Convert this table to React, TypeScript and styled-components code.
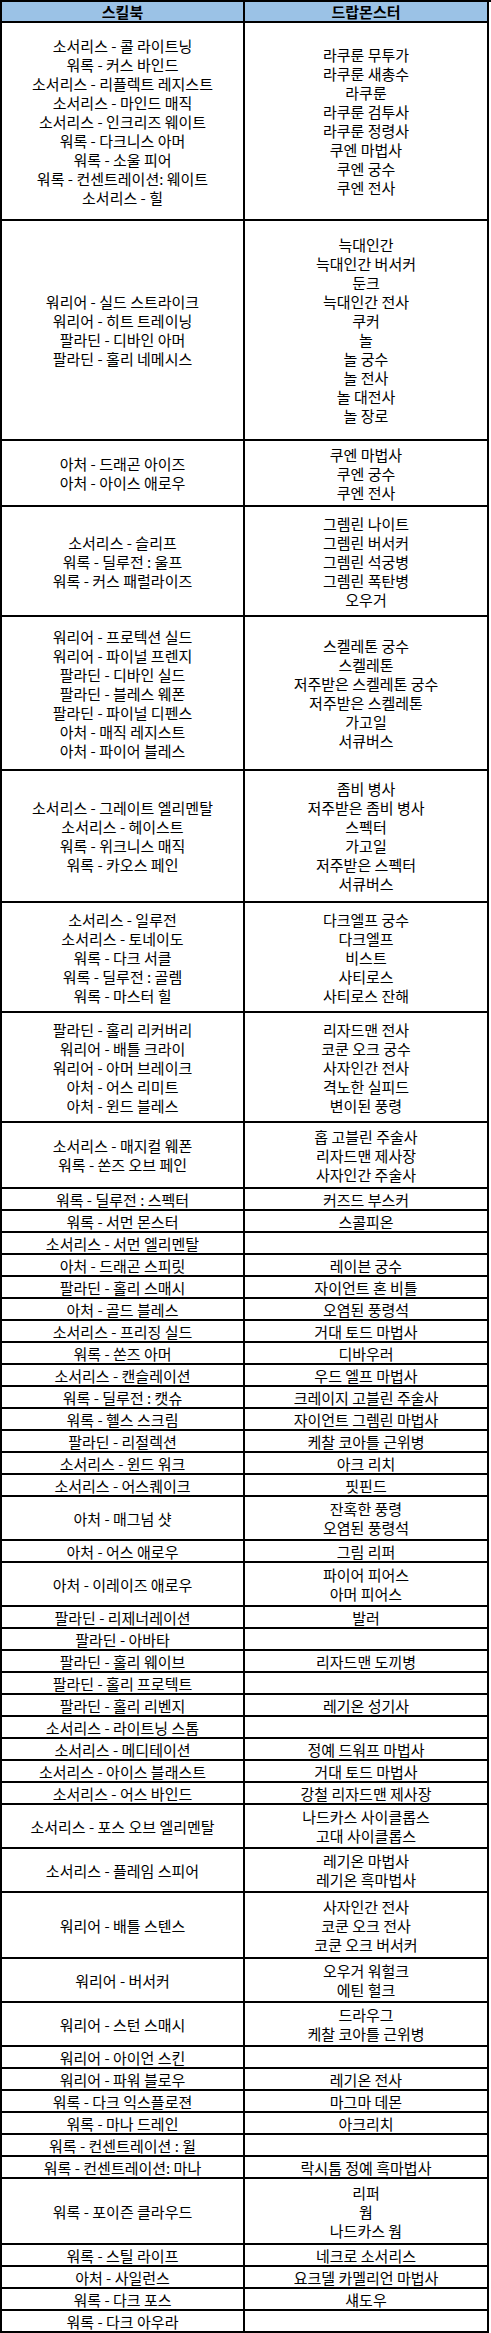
import styled, { createGlobalStyle } from "styled-components";

const GlobalStyle = createGlobalStyle`
  html, body {
    margin: 0;
    padding: 0;
    background: #fff;
  }
  body {
    font-family: "Noto Sans CJK KR", "Noto Sans", sans-serif;
    color: #000;
  }
`;

const Table = styled.div`
  width: 491px;
  box-sizing: border-box;
  border-top: 2px solid #000;
  border-left: 2px solid #000;
  display: grid;
  grid-template-columns: 243px 244px;
`;

const Cell = styled.div<{ $lines: number; $head?: boolean }>`
  box-sizing: border-box;
  height: ${({ $lines, $head }) => ($head ? 21 : $lines * 22)}px;
  border-right: 2px solid #000;
  border-bottom: 2px solid #000;
  background: ${({ $head }) => ($head ? "#9bc2e6" : "#fff")};
  display: flex;
  flex-direction: column;
  align-items: center;
  justify-content: center;
  text-align: center;
  font-size: 15px;
  line-height: 19px;
  font-weight: ${({ $head }) => ($head ? 700 : 400)};
  white-space: nowrap;
`;

type Row = { skill: string[]; drop: string[] };

const rows: Row[] = [
  {
    skill: [
      "소서리스 - 콜 라이트닝",
      "워록 - 커스 바인드",
      "소서리스 - 리플렉트 레지스트",
      "소서리스 - 마인드 매직",
      "소서리스 - 인크리즈 웨이트",
      "워록 - 다크니스 아머",
      "워록 - 소울 피어",
      "워록 - 컨센트레이션: 웨이트",
      "소서리스 - 힐",
    ],
    drop: [
      "라쿠룬 무투가",
      "라쿠룬 새총수",
      "라쿠룬",
      "라쿠룬 검투사",
      "라쿠룬 정령사",
      "쿠엔 마법사",
      "쿠엔 궁수",
      "쿠엔 전사",
    ],
  },
  {
    skill: [
      "워리어 - 실드 스트라이크",
      "워리어 - 히트 트레이닝",
      "팔라딘 - 디바인 아머",
      "팔라딘 - 홀리 네메시스",
    ],
    drop: [
      "늑대인간",
      "늑대인간 버서커",
      "둔크",
      "늑대인간 전사",
      "쿠커",
      "놀",
      "놀 궁수",
      "놀 전사",
      "놀 대전사",
      "놀 장로",
    ],
  },
  {
    skill: ["아처 - 드래곤 아이즈", "아처 - 아이스 애로우"],
    drop: ["쿠엔 마법사", "쿠엔 궁수", "쿠엔 전사"],
  },
  {
    skill: ["소서리스 - 슬리프", "워록 - 딜루전 : 울프", "워록 - 커스 패럴라이즈"],
    drop: ["그렘린 나이트", "그렘린 버서커", "그렘린 석궁병", "그렘린 폭탄병", "오우거"],
  },
  {
    skill: [
      "워리어 - 프로텍션 실드",
      "워리어 - 파이널 프렌지",
      "팔라딘 - 디바인 실드",
      "팔라딘 - 블레스 웨폰",
      "팔라딘 - 파이널 디펜스",
      "아처 - 매직 레지스트",
      "아처 - 파이어 블레스",
    ],
    drop: [
      "스켈레톤 궁수",
      "스켈레톤",
      "저주받은 스켈레톤 궁수",
      "저주받은 스켈레톤",
      "가고일",
      "서큐버스",
    ],
  },
  {
    skill: [
      "소서리스 - 그레이트 엘리멘탈",
      "소서리스 - 헤이스트",
      "워록 - 위크니스 매직",
      "워록 - 카오스 페인",
    ],
    drop: ["좀비 병사", "저주받은 좀비 병사", "스펙터", "가고일", "저주받은 스펙터", "서큐버스"],
  },
  {
    skill: [
      "소서리스 - 일루전",
      "소서리스 - 토네이도",
      "워록 - 다크 서클",
      "워록 - 딜루전 : 골렘",
      "워록 - 마스터 힐",
    ],
    drop: ["다크엘프 궁수", "다크엘프", "비스트", "사티로스", "사티로스 잔해"],
  },
  {
    skill: [
      "팔라딘 - 홀리 리커버리",
      "워리어 - 배틀 크라이",
      "워리어 - 아머 브레이크",
      "아처 - 어스 리미트",
      "아처 - 윈드 블레스",
    ],
    drop: ["리자드맨 전사", "코쿤 오크 궁수", "사자인간 전사", "격노한 실피드", "변이된 풍령"],
  },
  {
    skill: ["소서리스 - 매지컬 웨폰", "워록 - 쏜즈 오브 페인"],
    drop: ["홉 고블린 주술사", "리자드맨 제사장", "사자인간 주술사"],
  },
  { skill: ["워록 - 딜루전 : 스펙터"], drop: ["커즈드 부스커"] },
  { skill: ["워록 - 서먼 몬스터"], drop: ["스콜피온"] },
  { skill: ["소서리스 - 서먼 엘리멘탈"], drop: [] },
  { skill: ["아처 - 드래곤 스피릿"], drop: ["레이븐 궁수"] },
  { skill: ["팔라딘 - 홀리 스매시"], drop: ["자이언트 혼 비틀"] },
  { skill: ["아처 - 골드 블레스"], drop: ["오염된 풍령석"] },
  { skill: ["소서리스 - 프리징 실드"], drop: ["거대 토드 마법사"] },
  { skill: ["워록 - 쏜즈 아머"], drop: ["디바우러"] },
  { skill: ["소서리스 - 캔슬레이션"], drop: ["우드 엘프 마법사"] },
  { skill: ["워록 - 딜루전 : 캣슈"], drop: ["크레이지 고블린 주술사"] },
  { skill: ["워록 - 헬스 스크림"], drop: ["자이언트 그렘린 마법사"] },
  { skill: ["팔라딘 - 리절렉션"], drop: ["케찰 코아틀 근위병"] },
  { skill: ["소서리스 - 윈드 워크"], drop: ["아크 리치"] },
  { skill: ["소서리스 - 어스퀘이크"], drop: ["핏핀드"] },
  { skill: ["아처 - 매그넘 샷"], drop: ["잔혹한 풍령", "오염된 풍령석"] },
  { skill: ["아처 - 어스 애로우"], drop: ["그림 리퍼"] },
  { skill: ["아처 - 이레이즈 애로우"], drop: ["파이어 피어스", "아머 피어스"] },
  { skill: ["팔라딘 - 리제너레이션"], drop: ["발러"] },
  { skill: ["팔라딘 - 아바타"], drop: [] },
  { skill: ["팔라딘 - 홀리 웨이브"], drop: ["리자드맨 도끼병"] },
  { skill: ["팔라딘 - 홀리 프로텍트"], drop: [] },
  { skill: ["팔라딘 - 홀리 리벤지"], drop: ["레기온 성기사"] },
  { skill: ["소서리스 - 라이트닝 스톰"], drop: [] },
  { skill: ["소서리스 - 메디테이션"], drop: ["정예 드워프 마법사"] },
  { skill: ["소서리스 - 아이스 블래스트"], drop: ["거대 토드 마법사"] },
  { skill: ["소서리스 - 어스 바인드"], drop: ["강철 리자드맨 제사장"] },
  { skill: ["소서리스 - 포스 오브 엘리멘탈"], drop: ["나드카스 사이클롭스", "고대 사이클롭스"] },
  { skill: ["소서리스 - 플레임 스피어"], drop: ["레기온 마법사", "레기온 흑마법사"] },
  { skill: ["워리어 - 배틀 스텐스"], drop: ["사자인간 전사", "코쿤 오크 전사", "코쿤 오크 버서커"] },
  { skill: ["워리어 - 버서커"], drop: ["오우거 워헐크", "에틴 헐크"] },
  { skill: ["워리어 - 스턴 스매시"], drop: ["드라우그", "케찰 코아틀 근위병"] },
  { skill: ["워리어 - 아이언 스킨"], drop: [] },
  { skill: ["워리어 - 파워 블로우"], drop: ["레기온 전사"] },
  { skill: ["워록 - 다크 익스플로젼"], drop: ["마그마 데몬"] },
  { skill: ["워록 - 마나 드레인"], drop: ["아크리치"] },
  { skill: ["워록 - 컨센트레이션 : 윌"], drop: [] },
  { skill: ["워록 - 컨센트레이션: 마나"], drop: ["락시툼 정예 흑마법사"] },
  { skill: ["워록 - 포이즌 클라우드"], drop: ["리퍼", "웜", "나드카스 웜"] },
  { skill: ["워록 - 스틸 라이프"], drop: ["네크로 소서리스"] },
  { skill: ["아처 - 사일런스"], drop: ["요크델 카멜리언 마법사"] },
  { skill: ["워록 - 다크 포스"], drop: ["섀도우"] },
  { skill: ["워록 - 다크 아우라"], drop: [] },
];

const Lines = ({ items }: { items: string[] }) => (
  <>
    {items.map((t, i) => (
      <span key={i}>{t}</span>
    ))}
  </>
);

export default function App() {
  return (
    <>
      <GlobalStyle />
      <Table>
        <Cell $lines={1} $head>
          스킬북
        </Cell>
        <Cell $lines={1} $head>
          드랍몬스터
        </Cell>
        {rows.map((r, i) => {
          const n = Math.max(r.skill.length, r.drop.length, 1);
          return [
            <Cell key={`s${i}`} $lines={n}>
              <Lines items={r.skill} />
            </Cell>,
            <Cell key={`d${i}`} $lines={n}>
              <Lines items={r.drop} />
            </Cell>,
          ];
        })}
      </Table>
    </>
  );
}
